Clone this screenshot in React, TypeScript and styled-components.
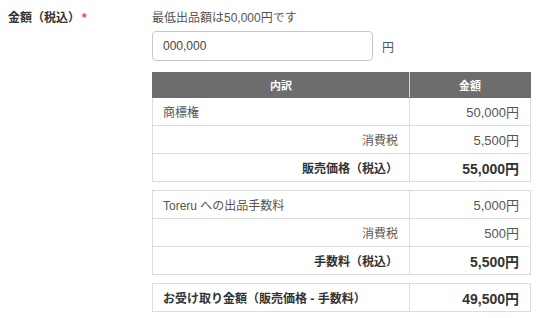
import React from 'react';
import styled, {createGlobalStyle} from 'styled-components';

const GlobalStyle = createGlobalStyle`
  body {
    margin: 0;
    background: #fff;
    font-family: "Liberation Sans", "Noto Sans CJK JP", sans-serif;
    color: #333;
  }
`;

const FormRow = styled.div`
  display: flex;
  padding-top: 11px;
`;

const Label = styled.div`
  width: 144px;
  padding-left: 8px;
  font-size: 12px;
  font-weight: bold;
  color: #333;
  line-height: 14px;
`;

const Required = styled.span`
  color: #e8463a;
  margin-left: 2px;
`;

const Field = styled.div`
  width: 378px;
  display: flex;
  flex-direction: column;
`;

const Hint = styled.div`
  font-size: 12px;
  line-height: 14px;
  color: #555;
`;

const InputRow = styled.div`
  display: flex;
  align-items: center;
  margin-top: 6px;
`;

const PriceInput = styled.input`
  box-sizing: border-box;
  width: 221px;
  height: 30px;
  border: 1px solid #c8c8c8;
  border-radius: 4px;
  padding: 0 10px;
  font-family: inherit;
  font-size: 12px;
  color: #444;
  outline: none;
  &::placeholder {
    color: #444;
  }
`;

const Unit = styled.span`
  margin-left: 9px;
  font-size: 12px;
  color: #555;
`;

const Table = styled.table<{$gap?: number}>`
  border-collapse: collapse;
  width: 378px;
  margin-top: ${p => p.$gap ?? 0}px;
  table-layout: fixed;
`;

const Th = styled.th`
  background: #6d6d6d;
  color: #fff;
  font-size: 11px;
  font-weight: bold;
  height: 24px;
  padding: 0;
  border: 1px solid #6d6d6d;
  border-right-color: #d9d9d9;
  &:last-child {
    border-right-color: #6d6d6d;
  }
`;

const Td = styled.td<{$align?: 'left' | 'right'; $bold?: boolean; $amount?: boolean}>`
  height: 27px;
  padding: 0 11px 0 10px;
  border: 1px solid #dcdcdc;
  text-align: ${p => p.$align ?? 'left'};
  font-size: ${p => (p.$bold && p.$amount ? 14 : p.$amount ? 13 : 12)}px;
  font-weight: ${p => (p.$bold ? 'bold' : 'normal')};
  color: ${p => (p.$bold ? '#333' : '#555')};
  white-space: nowrap;
`;

type Row = {label: string; amount: string; align?: 'left' | 'right'; bold?: boolean};

const salesRows: Row[] = [
    {label: '商標権', amount: '50,000円'},
    {label: '消費税', amount: '5,500円', align: 'right'},
    {label: '販売価格（税込）', amount: '55,000円', align: 'right', bold: true},
];

const feeRows: Row[] = [
    {label: 'Toreru への出品手数料', amount: '5,000円'},
    {label: '消費税', amount: '500円', align: 'right'},
    {label: '手数料（税込）', amount: '5,500円', align: 'right', bold: true},
];

const totalRows: Row[] = [
    {label: 'お受け取り金額（販売価格 - 手数料）', amount: '49,500円', bold: true},
];

const Rows = ({rows}: {rows: Row[]}) => (
    <>
        {rows.map(r => (
            <tr key={r.label}>
                <Td $align={r.align} $bold={r.bold}>{r.label}</Td>
                <Td $align="right" $bold={r.bold} $amount>{r.amount}</Td>
            </tr>
        ))}
    </>
);

const Cols = () => (
    <colgroup>
        <col style={{width: 257}}/>
        <col style={{width: 121}}/>
    </colgroup>
);

const App = () => {
    return (
        <>
            <GlobalStyle/>
            <FormRow>
                <Label>
                    金額（税込）<Required>*</Required>
                </Label>
                <Field>
                    <Hint>最低出品額は50,000円です</Hint>
                    <InputRow>
                        <PriceInput placeholder="000,000"/>
                        <Unit>円</Unit>
                    </InputRow>
                    <Table $gap={11}>
                        <Cols/>
                        <thead>
                            <tr>
                                <Th>内訳</Th>
                                <Th>金額</Th>
                            </tr>
                        </thead>
                        <tbody>
                            <Rows rows={salesRows}/>
                        </tbody>
                    </Table>
                    <Table $gap={8}>
                        <Cols/>
                        <tbody>
                            <Rows rows={feeRows}/>
                        </tbody>
                    </Table>
                    <Table $gap={8}>
                        <Cols/>
                        <tbody>
                            <Rows rows={totalRows}/>
                        </tbody>
                    </Table>
                </Field>
            </FormRow>
        </>
    );
};

export default App;
